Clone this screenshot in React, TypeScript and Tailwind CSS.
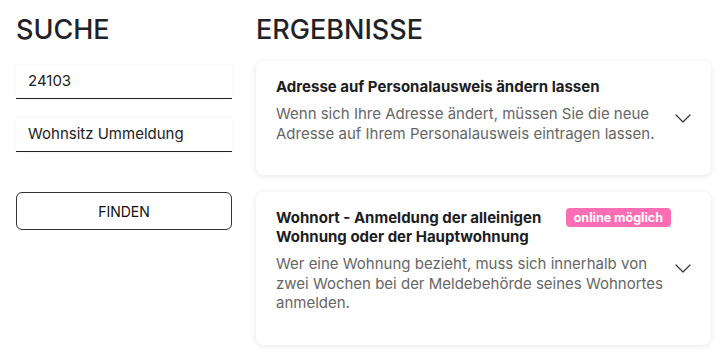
const font = { fontFamily: 'Inter, "Noto Sans", sans-serif' };

function Chevron() {
  return (
    <svg className="h-4 w-4 text-[#333]" viewBox="0 0 16 16" fill="none">
      <path d="M1 5l7 7 7-7" stroke="currentColor" strokeWidth={1.2} strokeLinecap="round" strokeLinejoin="round" />
    </svg>
  );
}

interface ResultCardProps {
  title: string;
  text: string;
  online?: boolean;
}

function ResultCard({ title, text, online = false }: ResultCardProps) {
  return (
    <div className="flex items-center rounded-lg bg-white pl-5 pr-5 shadow-[0_1px_6px_rgba(0,0,0,0.1)]">
      <div className="flex-1 pt-4 pb-8">
        <div className="flex items-start justify-between gap-3">
          <h3 className="flex-1 text-[15px] font-bold leading-[19px] text-[#1d1d1f]">{title}</h3>
          {online && (
            <span className="shrink-0 whitespace-nowrap rounded-[4px] bg-[#ff6eb4] px-[8px] py-[2px] text-[12.5px] font-bold leading-[15px] text-white">
              online möglich
            </span>
          )}
        </div>
        <p className="mt-2 text-[15px] leading-[19.5px] text-[#666]">{text}</p>
      </div>
      <div className="ml-1">
        <Chevron />
      </div>
    </div>
  );
}

export default function App() {
  return (
    <div className="flex h-[361px] w-[726px] gap-6 bg-white py-4 pl-4 pr-[15px]" style={font}>
      {/* Suche */}
      <div className="w-[216px]">
        <h2 className="text-[27px] font-medium leading-none text-[#1f2328]">SUCHE</h2>
        <div className="mt-[22px] flex h-[34px] items-center border-b border-[#222] px-3 text-[15px] text-[#222] shadow-[0_0_4px_rgba(0,0,0,0.05)]">
          24103
        </div>
        <div className="mt-[19px] flex h-[34px] items-center border-b border-[#222] px-3 text-[15px] text-[#222] shadow-[0_0_4px_rgba(0,0,0,0.05)]">
          Wohnsitz Ummeldung
        </div>
        <button className="mt-[40px] h-[38px] w-full rounded-md border border-[#333] text-[14px] text-[#111]">
          FINDEN
        </button>
      </div>

      {/* Ergebnisse */}
      <div className="flex-1">
        <h2 className="text-[27px] font-medium leading-none text-[#1f2328]">ERGEBNISSE</h2>
        <div className="mt-[18px] flex flex-col gap-[17px]">
          <ResultCard
            title="Adresse auf Personalausweis ändern lassen"
            text="Wenn sich Ihre Adresse ändert, müssen Sie die neue Adresse auf Ihrem Personalausweis eintragen lassen."
          />
          <ResultCard
            title="Wohnort - Anmeldung der alleinigen Wohnung oder der Hauptwohnung"
            text="Wer eine Wohnung bezieht, muss sich innerhalb von zwei Wochen bei der Meldebehörde seines Wohnortes anmelden."
            online
          />
        </div>
      </div>
    </div>
  );
}
